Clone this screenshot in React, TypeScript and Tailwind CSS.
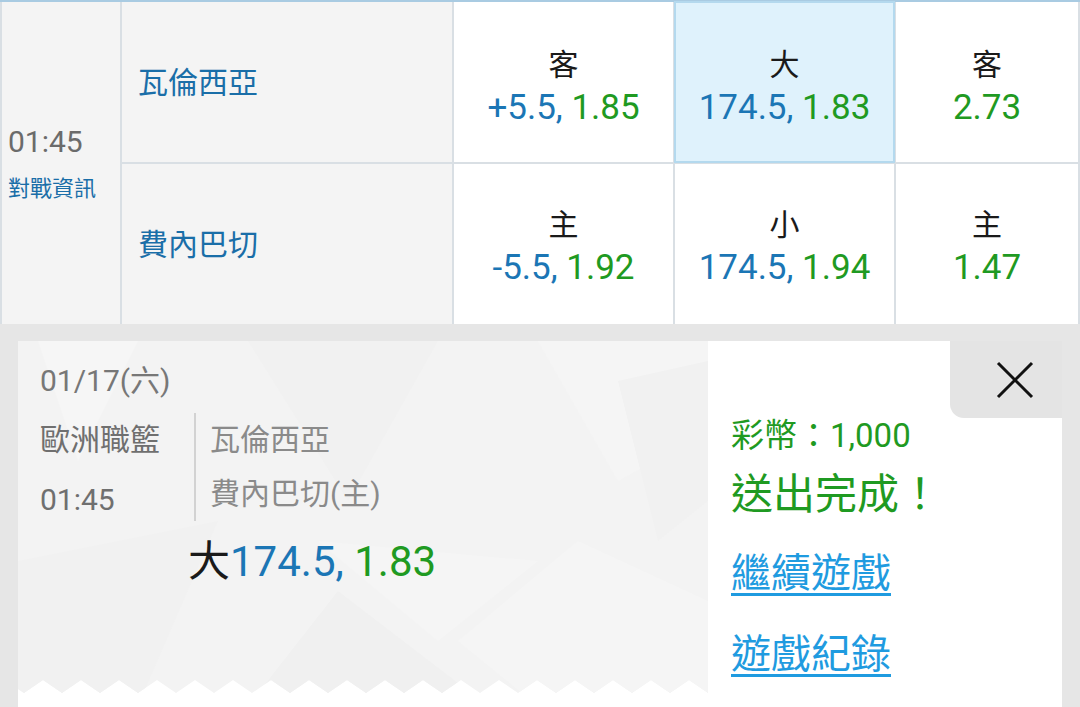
const FONT = "font-['Roboto','Noto_Sans_CJK_TC',sans-serif]";

// ─── Top odds table ──────────────────────────────────

type Odd = {
  label: string;
  line?: string;
  price: string;
  active?: boolean;
};

const rows: { team: string; odds: Odd[] }[] = [
  {
    team: "瓦倫西亞",
    odds: [
      { label: "客", line: "+5.5, ", price: "1.85" },
      { label: "大", line: "174.5, ", price: "1.83", active: true },
      { label: "客", price: "2.73" },
    ],
  },
  {
    team: "費內巴切",
    odds: [
      { label: "主", line: "-5.5, ", price: "1.92" },
      { label: "小", line: "174.5, ", price: "1.94" },
      { label: "主", price: "1.47" },
    ],
  },
];

function OddCell({ odd, first }: { odd: Odd; first: boolean }) {
  return (
    <div
      className={`flex flex-col items-center justify-center ${first ? "pt-[10px]" : "pt-[6px]"} ${
        odd.active ? "bg-[#dff2fc] outline-2 outline-[#b4d9ee] -outline-offset-1" : "bg-white"
      }`}
    >
      <div className="text-[30px] leading-[36px] text-[#1a1a1a]">{odd.label}</div>
      <div className="mt-[5px] text-[35px] leading-[40px]">
        {odd.line && <span className="text-[#1b76b5]">{odd.line}</span>}
        <span className="text-[#1f9a22]">{odd.price}</span>
      </div>
    </div>
  );
}

function OddsTable() {
  return (
    <div className="grid grid-cols-[118px_330px_219px_219px_182px] grid-rows-[160px_160px] gap-[2px] bg-[#d9dfe4] border-t-2 border-[#a9cbe2] px-[2px]">
      <div className="row-span-2 flex flex-col justify-center bg-[#f4f4f4] pl-[6px]">
        <div className="text-[30px] leading-[36px] text-[#6b6b6b]">01:45</div>
        <div className="mt-[15px] text-[22px] leading-[28px] text-[#1a6ea8]">對戰資訊</div>
      </div>
      {rows.map((r, ri) => (
        <>
          <div key={`t${ri}`} className="flex items-center bg-[#f4f4f4] pl-[16px] text-[30px] text-[#1a6ea8]">
            {r.team}
          </div>
          {r.odds.map((o, oi) => (
            <OddCell key={`o${ri}${oi}`} odd={o} first={ri === 0} />
          ))}
        </>
      ))}
    </div>
  );
}

// ─── Ticket background ───────────────────────────────

function TicketPattern() {
  const w = 690;
  const top = 339;
  const bot = 352;
  const step = 38;
  const pts: string[] = [`0,0`, `${w},0`, `${w},${bot}`];
  for (let x = w; x > 0; x -= step) {
    pts.push(`${x - step / 2},${top}`);
    pts.push(`${Math.max(x - step, 0)},${bot}`);
  }
  return (
    <svg className="absolute inset-0" width={w} height={365} viewBox={`0 0 ${w} 365`}>
      <defs>
        <clipPath id="tk">
          <polygon points={pts.join(" ")} />
        </clipPath>
      </defs>
      <g clipPath="url(#tk)">
        <rect width={w} height={365} fill="#f3f3f3" />
        <polygon points="20,0 120,0 60,120" fill="#f6f6f6" />
        <polygon points="230,0 420,0 330,160" fill="#f1f1f1" />
        <polygon points="520,0 690,0 690,90 600,140" fill="#f5f5f5" />
        <polygon points="0,220 200,180 120,365 0,365" fill="#f1f1f1" />
        <polygon points="230,365 320,250 470,365" fill="#f0f0f0" />
        <polygon points="440,300 560,200 690,260 690,365 520,365" fill="#f5f5f5" />
        <polygon points="600,40 690,20 690,160 640,200" fill="#f1f1f1" />
        <polygon points="300,200 520,220 420,300" fill="#f5f5f5" />
      </g>
    </svg>
  );
}

// ─── Page ────────────────────────────────────────────

export default function App() {
  return (
    <div className={`w-[1080px] h-[707px] overflow-hidden bg-[#e6e6e6] ${FONT}`}>
      <OddsTable />
      <div className="px-[18px] pt-[17px] h-[383px]">
        <div className="flex h-[366px]">
          {/* ticket */}
          <div className="relative w-[690px] bg-white overflow-hidden">
            <TicketPattern />
            <div className="relative flex flex-col pl-[22px] pt-[22px]">
              <div className="text-[30px] leading-[36px] text-[#777]">01/17(六)</div>
              <div className="mt-[14px] flex h-[108px]">
                <div className="w-[154px] pt-[9px] text-[30px] leading-[36px] text-[#6f6f6f]">
                  <div>歐洲職籃</div>
                  <div className="mt-[24px]">01:45</div>
                </div>
                <div className="w-[2px] bg-[#d2d2d2]" />
                <div className="pl-[14px] pt-[9px] text-[30px] leading-[36px] text-[#8a8a8a]">
                  <div>瓦倫西亞</div>
                  <div className="mt-[18px]">費內巴切(主)</div>
                </div>
              </div>
              <div className="mt-[17px] pl-[148px] text-[42px] leading-[48px]">
                <span className="text-[#1a1a1a]">大</span>
                <span className="text-[#1b76b5]">174.5, </span>
                <span className="text-[#1f9a22]">1.83</span>
              </div>
            </div>
          </div>

          {/* result */}
          <div className="relative flex-1 bg-white pl-[23px] pt-[76px]">
            <div className="absolute top-0 right-0 w-[112px] h-[77px] bg-[#e4e4e4] rounded-bl-[14px] flex items-center justify-center pl-[18px]">
              <svg width="38" height="38" viewBox="0 0 38 38">
                <path d="M2 2 L36 36 M36 2 L2 36" stroke="#111" strokeWidth="3" fill="none" />
              </svg>
            </div>
            <div className="text-[33px] leading-[38px] text-[#1f9a22]">彩幣：1,000</div>
            <div className="mt-[16px] text-[42px] leading-[48px] text-[#1f9a22]">送出完成！</div>
            <div className="mt-[31px] text-[40px] leading-[48px] text-[#1f9be0] underline decoration-[3px] underline-offset-[6px]">
              繼續遊戲
            </div>
            <div className="mt-[33px] text-[40px] leading-[48px] text-[#1f9be0] underline decoration-[3px] underline-offset-[6px]">
              遊戲紀錄
            </div>
          </div>
        </div>
      </div>
    </div>
  );
}
